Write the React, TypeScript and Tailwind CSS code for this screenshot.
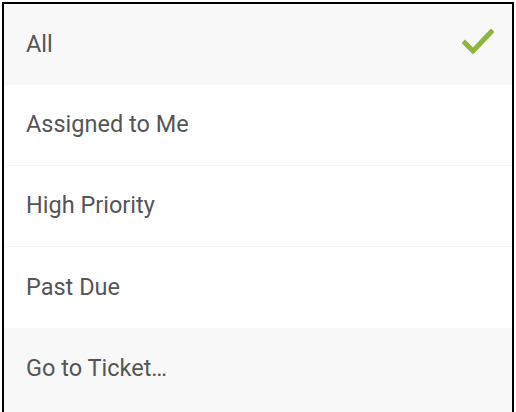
import React from 'react';

interface FilterItem {
  label: string;
  selected?: boolean;
  shaded?: boolean;
}

const items: FilterItem[] = [
  { label: 'All', selected: true, shaded: true },
  { label: 'Assigned to Me' },
  { label: 'High Priority' },
  { label: 'Past Due' },
  { label: 'Go to Ticket…', shaded: true },
];

const CheckIcon = () => (
  <svg width="32" height="28" viewBox="0 0 32 28" className="text-[#8db63c] -mt-1">
    <path
      d="M3 14 L11 22 L29 3"
      fill="none"
      stroke="currentColor"
      strokeWidth="5"
      strokeLinecap="square"
    />
  </svg>
);

const App: React.FC = () => {
  return (
    <div className="w-[516px] h-[412px] bg-white p-[2px] pb-0">
      <div className="flex flex-col h-[412px] border-2 border-b-0 border-black font-['Roboto',sans-serif]">
        {items.map((item, index) => (
          <div
            key={index}
            className={`flex items-center justify-between h-[81px] shrink-0 pl-[22px] pr-[18px] ${
              item.shaded ? 'bg-[#f8f8f8]' : 'bg-white'
            } ${
              !item.shaded && index < items.length - 1 && !items[index + 1].shaded
                ? 'border-b border-[#f6f6f6]'
                : ''
            }`}
          >
            <span className="text-[23.5px] text-[#555555]">{item.label}</span>
            {item.selected && <CheckIcon />}
          </div>
        ))}
        <div className="flex-1 bg-[#f8f8f8]" />
      </div>
    </div>
  );
};

export default App;
